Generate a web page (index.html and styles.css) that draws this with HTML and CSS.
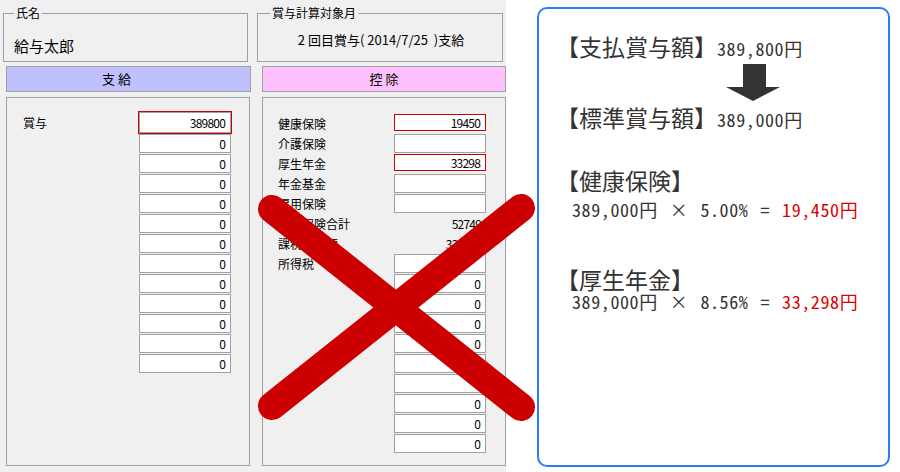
FILE: index.html
```html
<!DOCTYPE html>
<html lang="ja">
<head>
    <meta charset="UTF-8">
    <title>賞与計算</title>
    <link rel="stylesheet" href="styles.css">
</head>
<body>
<div class="page">
    <div class="form">
        <!-- 支給 -->
        <div class="col col-pay">
            <fieldset class="group group-name">
                <legend>氏名</legend>
                <div class="name">給与太郎</div>
            </fieldset>
            <div class="tab tab-pay">支 給</div>
            <div class="panel panel-pay">
                <div class="row row-first"><span class="label">賞与</span><span class="box box-big">389800</span></div>
                <div class="row"><span class="label"></span><span class="box">0</span></div>
                <div class="row"><span class="label"></span><span class="box">0</span></div>
                <div class="row"><span class="label"></span><span class="box">0</span></div>
                <div class="row"><span class="label"></span><span class="box">0</span></div>
                <div class="row"><span class="label"></span><span class="box">0</span></div>
                <div class="row"><span class="label"></span><span class="box">0</span></div>
                <div class="row"><span class="label"></span><span class="box">0</span></div>
                <div class="row"><span class="label"></span><span class="box">0</span></div>
                <div class="row"><span class="label"></span><span class="box">0</span></div>
                <div class="row"><span class="label"></span><span class="box">0</span></div>
                <div class="row"><span class="label"></span><span class="box">0</span></div>
                <div class="row"><span class="label"></span><span class="box">0</span></div>
            </div>
        </div>

        <!-- 控除 -->
        <div class="col col-ded">
            <fieldset class="group group-month">
                <legend>賞与計算対象月</legend>
                <div class="month">2 回目賞与( 2014/7/25  )支給</div>
            </fieldset>
            <div class="tab tab-ded">控 除</div>
            <div class="panel panel-ded">
                <div class="row"><span class="label">健康保険</span><span class="box box-red">19450</span></div>
                <div class="row"><span class="label">介護保険</span><span class="box"></span></div>
                <div class="row"><span class="label">厚生年金</span><span class="box box-red">33298</span></div>
                <div class="row"><span class="label">年金基金</span><span class="box"></span></div>
                <div class="row"><span class="label">雇用保険</span><span class="box"></span></div>
                <div class="row"><span class="label">社会保険合計</span><span class="value">52749</span></div>
                <div class="row"><span class="label">課税対象額</span><span class="value">336251</span></div>
                <div class="row"><span class="label">所得税</span><span class="box"></span></div>
                <div class="row"><span class="label"></span><span class="box">0</span></div>
                <div class="row"><span class="label"></span><span class="box">0</span></div>
                <div class="row"><span class="label"></span><span class="box">0</span></div>
                <div class="row"><span class="label"></span><span class="box">0</span></div>
                <div class="row"><span class="label"></span><span class="box"></span></div>
                <div class="row"><span class="label"></span><span class="box"></span></div>
                <div class="row"><span class="label"></span><span class="box">0</span></div>
                <div class="row"><span class="label"></span><span class="box">0</span></div>
                <div class="row"><span class="label"></span><span class="box">0</span></div>
            </div>
        </div>
    </div>

    <div class="note">
        <div class="card">
            <div class="head head-1">【支払賞与額】<span class="amount">389,800円</span></div>
            <svg class="arrow" width="54" height="37" viewBox="0 0 54 37">
                <path d="M17 0 H40 V23 H54 L27 37 L0 23 H17 Z" fill="#333"/>
            </svg>
            <div class="head head-2">【標準賞与額】<span class="amount">389,000円</span></div>
            <div class="head head-3">【健康保険】</div>
            <div class="calc calc-1"><span>389,000円</span><span class="op">×</span><span>5.00%</span><span class="op">=</span><span class="result">19,450円</span></div>
            <div class="head head-4">【厚生年金】</div>
            <div class="calc calc-2"><span>389,000円</span><span class="op">×</span><span>8.56%</span><span class="op">=</span><span class="result">33,298円</span></div>
        </div>
    </div>

    <!-- 赤いバツ印 -->
    <svg class="cross" width="900" height="472" viewBox="0 0 900 472">
        <line x1="272" y1="209" x2="521" y2="407" stroke="#cc0000" stroke-width="28" stroke-linecap="round"/>
        <line x1="272" y1="406" x2="521" y2="208" stroke="#cc0000" stroke-width="28" stroke-linecap="round"/>
    </svg>
</div>
</body>
</html>
```

FILE: styles.css
```css
html, body {
    margin: 0;
    padding: 0;
}
body {
    font-family: "Noto Sans CJK JP", "Noto Sans", sans-serif;
    background: #ffffff;
    color: #000;
}
.page {
    position: relative;
    width: 900px;
    height: 472px;
    display: flex;
    overflow: hidden;
}

/* 左側のフォーム */
.form {
    width: 506px;
    height: 472px;
    background: #f0f0f0;
    display: flex;
    padding-left: 3px;
    padding-top: 6px;
    box-sizing: border-box;
    gap: 6px;
}
.col {
    display: flex;
    flex-direction: column;
}
.col-pay {
    width: 248px;
}
.col-ded {
    width: 249px;
}
.group {
    margin: 0;
    border: 1px solid #a0a0a0;
    height: 56px;
    box-sizing: border-box;
    padding: 0 10px;
}
.group legend {
    font-size: 12px;
    line-height: 14px;
    padding: 0 2px;
}
.group-name {
    width: 245px;
}
.group-month {
    width: 246px;
    padding-left: 12px;
}
.name {
    font-size: 15px;
    line-height: 20px;
    margin-top: 16px;
}
.month {
    font-size: 13px;
    line-height: 18px;
    margin-top: 11px;
    text-align: center;
    white-space: pre;
}
.tab {
    margin-top: 4px;
    height: 26px;
    box-sizing: border-box;
    border: 1px solid #a0a0a0;
    font-size: 13px;
    line-height: 24px;
    text-align: center;
}
.tab-pay {
    margin-left: 3px;
    width: 245px;
    background: #c0c0ff;
    padding-right: 24px;
}
.tab-ded {
    margin-left: 5px;
    width: 244px;
    background: #ffc0ff;
}
.panel {
    margin-top: 5px;
    height: 369px;
    box-sizing: border-box;
    border: 1px solid #a0a0a0;
}
.panel-pay {
    margin-left: 3px;
    width: 244px;
    padding: 14px 18px 0 16px;
}
.panel-ded {
    margin-left: 5px;
    width: 244px;
    padding: 16px 19px 0 15px;
}
.row {
    display: flex;
    height: 20px;
}
.row-first {
    height: 22px;
}
.label {
    flex: 1;
    font-size: 12px;
    line-height: 19px;
    white-space: nowrap;
}
.row-first .label {
    line-height: 21px;
}
.box, .value {
    width: 92px;
    height: 19px;
    box-sizing: border-box;
    font-size: 12px;
    line-height: 17px;
    letter-spacing: -0.8px;
    text-align: right;
    padding-right: 5px;
}
.box {
    background: #fff;
    border: 1px solid #a0a0a0;
}
.box-big {
    height: 21px;
    line-height: 19px;
    outline: 1px solid #cc0000;
}
.box-red {
    height: 17px;
    line-height: 15px;
    border-color: #cc0000;
}
.value {
    line-height: 19px;
}

/* 右側の説明 */
.note {
    flex: 1;
}
.card {
    margin: 7px 0 0 31px;
    width: 353px;
    height: 460px;
    box-sizing: border-box;
    border: 2px solid #2b7cf6;
    border-radius: 10px;
    padding: 25px 0 0 17px;
    color: #333;
}
.head {
    font-size: 23px;
    line-height: 24px;
    white-space: nowrap;
}
.amount, .calc {
    font-size: 18px;
    font-feature-settings: "hwid";
    letter-spacing: 0.6px;
}
.arrow {
    display: block;
    margin: 4px 0 0 170px;
}
.head-2 {
    margin-top: 4px;
}
.head-3 {
    margin-top: 37px;
}
.head-4 {
    margin-top: 48px;
}
.calc {
    line-height: 20px;
    margin-left: 16px;
    white-space: nowrap;
}
.calc-1 {
    margin-top: 7px;
}
.op {
    margin: 0 12px;
}
.result {
    color: #dd0000;
}

.cross {
    position: absolute;
    left: 0;
    top: 0;
    pointer-events: none;
}
```
